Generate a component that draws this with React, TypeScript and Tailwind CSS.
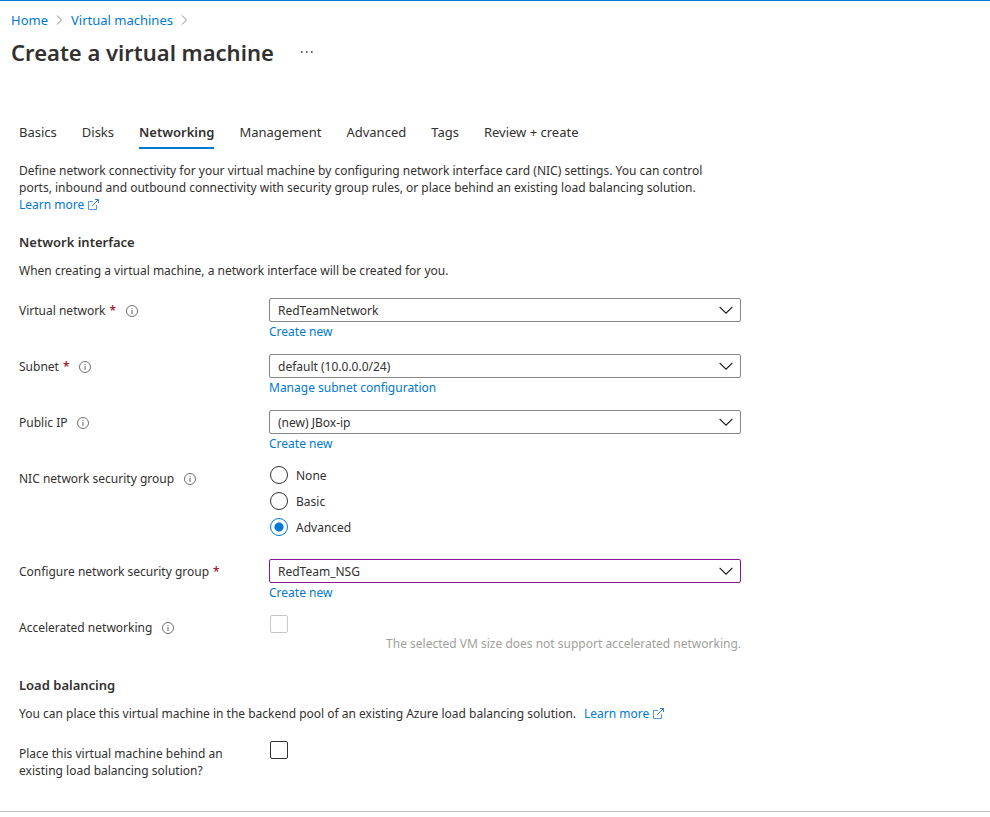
import { useState, type ReactNode } from "react";

const linkClass = "text-[#0078d4] hover:underline";

function Info() {
  return (
    <button type="button" aria-label="More information" className="ml-[10px] shrink-0 text-[#605e5c]">
      <svg width="12" height="12" viewBox="0 0 12 12" fill="none" stroke="currentColor" className="block">
        <circle cx="6" cy="6" r="5.5" strokeWidth="0.9" />
        <path d="M6 5v4M6 3v1.1" strokeWidth="1" />
      </svg>
    </button>
  );
}

function External() {
  return (
    <svg width="11" height="11" viewBox="0 0 11 11" fill="none" stroke="#2b7fdc" strokeWidth="1" className="ml-1 inline-block align-[-1px]" aria-hidden="true">
      <path d="M5 2.5H.5v8h8V6" strokeWidth="0.8" />
      <path d="M4.2 6.8 10.2.8M7 .5h3.5V4" />
    </svg>
  );
}

function Crumb() {
  return (
    <svg width="7" height="10" viewBox="0 0 7 10" fill="none" stroke="#8a8886" strokeWidth="1" aria-hidden="true">
      <path d="M1 .5 5.5 5 1 9.5" />
    </svg>
  );
}

function Star() {
  return <span className="ml-1 font-semibold text-[#a4262c]">*</span>;
}

type RowProps = { label: string; htmlFor?: string; id?: string; required?: boolean; info?: boolean; children: ReactNode };

function Row({ label, htmlFor, id, required, info, children }: RowProps) {
  return (
    <div className="grid grid-cols-[250px_minmax(0,1fr)]">
      <div className="flex items-center self-start pt-1">
        <label htmlFor={htmlFor} id={id} className="max-w-[220px]">
          {label}
          {required && <Star />}
        </label>
        {info && <Info />}
      </div>
      <div>{children}</div>
    </div>
  );
}

function Dropdown({ id, value, link, active }: { id: string; value: string; link: string; active?: boolean }) {
  return (
    <div className="h-14">
      <div className="relative">
        <select
          id={id}
          className={`block h-6 w-full appearance-none rounded-[2px] border bg-white pr-8 pl-2 outline-none ${active ? "border-[#881798]" : "border-[#8a8886]"}`}
        >
          <option>{value}</option>
        </select>
        <svg width="14" height="8" viewBox="0 0 14 8" fill="none" stroke="#201f1e" strokeWidth="1.2" className="pointer-events-none absolute top-2 right-2" aria-hidden="true">
          <path d="M.6.9 7 7.2 13.4.9" />
        </svg>
      </div>
      <a href="#" className={`block w-fit pt-px ${linkClass}`}>{link}</a>
    </div>
  );
}

const tabs = ["Basics", "Disks", "Networking", "Management", "Advanced", "Tags", "Review + create"];
const groups = ["None", "Basic", "Advanced"];

export default function App() {
  const [group, setGroup] = useState("Advanced");
  return (
    <div className="border-t border-[#0078d4] bg-white font-['Noto_Sans','Open_Sans',sans-serif] text-[12px] leading-[17px] text-[#323130]">
      <header className="px-[11px] pt-[9px]">
        <nav aria-label="Breadcrumb" className="flex items-center gap-2 text-[13px] leading-5">
          <a href="#" className={linkClass}>Home</a>
          <Crumb />
          <a href="#" className={linkClass}>Virtual machines</a>
          <Crumb />
        </nav>
        <div className="flex items-center gap-[27px] pt-[6px]">
          <h1 className="text-[22px] leading-8 font-semibold">Create a virtual machine</h1>
          <button type="button" aria-label="More actions">
            <svg width="12" height="2" viewBox="0 0 12 2" fill="#323130" className="block">
              <path d="M0 .2h1.6v1.6H0zM5 .2h1.6v1.6H5zM10 .2h1.6v1.6H10z" />
            </svg>
          </button>
        </div>
      </header>

      <main className="max-w-[760px] px-[19px] pt-[49px]">
        <div role="tablist" className="flex gap-[25px] text-[13px]">
          {tabs.map((t) => (
            <button
              key={t}
              type="button"
              role="tab"
              aria-selected={t === "Networking"}
              className={`h-8 border-b-2 ${t === "Networking" ? "border-[#0078d4] font-semibold" : "border-transparent"}`}
            >
              {t}
            </button>
          ))}
        </div>

        <p className="max-w-[700px] pt-[13px]">
          Define network connectivity for your virtual machine by configuring network interface card (NIC) settings. You can control
          ports, inbound and outbound connectivity with security group rules, or place behind an existing load balancing solution.{" "}
          <a href="#" className={`block w-fit ${linkClass}`}>Learn more<External /></a>
        </p>

        <h2 className="pt-[21px] text-[13px] font-semibold">Network interface</h2>
        <p className="pt-[11px]">When creating a virtual machine, a network interface will be created for you.</p>

        <div className="pt-[19px]">
          <Row label="Virtual network" htmlFor="vnet" required info>
            <Dropdown id="vnet" value="RedTeamNetwork" link="Create new" />
          </Row>
          <Row label="Subnet" htmlFor="subnet" required info>
            <Dropdown id="subnet" value="default (10.0.0.0/24)" link="Manage subnet configuration" />
          </Row>
          <Row label="Public IP" htmlFor="ip" info>
            <Dropdown id="ip" value="(new) JBox-ip" link="Create new" />
          </Row>
          <Row label="NIC network security group" id="nic-label" info>
            <div role="radiogroup" aria-labelledby="nic-label" className="flex flex-col gap-2 pb-[23px] pl-px">
              {groups.map((g) => (
                <label key={g} className="flex h-[18px] w-fit items-center gap-2">
                  <input
                    type="radio"
                    name="nsg"
                    checked={group === g}
                    onChange={() => setGroup(g)}
                    className="size-[18px] appearance-none rounded-full border border-[#323130] checked:border-[#0078d4] checked:bg-[radial-gradient(circle,#0078d4_4px,transparent_5px)]"
                  />
                  {g}
                </label>
              ))}
            </div>
          </Row>
          <Row label="Configure network security group" htmlFor="nsg" required>
            <Dropdown id="nsg" value="RedTeam_NSG" link="Create new" active />
          </Row>
          <Row label="Accelerated networking" htmlFor="accel" info>
            <input id="accel" type="checkbox" disabled className="ml-px block size-[18px] appearance-none rounded-[2px] border border-[#c8c6c4]" />
            <p className="pt-[2px] text-right text-[#a19f9d]">The selected VM size does not support accelerated networking.</p>
          </Row>
        </div>

        <h2 className="pt-[25px] text-[13px] font-semibold">Load balancing</h2>
        <p className="pt-[11px]">
          You can place this virtual machine in the backend pool of an existing Azure load balancing solution.
          <a href="#" className={`ml-2 ${linkClass}`}>Learn more<External /></a>
        </p>

        <div className="pt-[19px] pb-8">
          <Row label="Place this virtual machine behind an existing load balancing solution?" htmlFor="lb">
            <input id="lb" type="checkbox" className="ml-px block size-[18px] appearance-none rounded-[2px] border border-[#323130] checked:bg-[#0078d4]" />
          </Row>
        </div>
      </main>
      <footer className="border-t border-[#bdbdbd]" />
    </div>
  );
}
